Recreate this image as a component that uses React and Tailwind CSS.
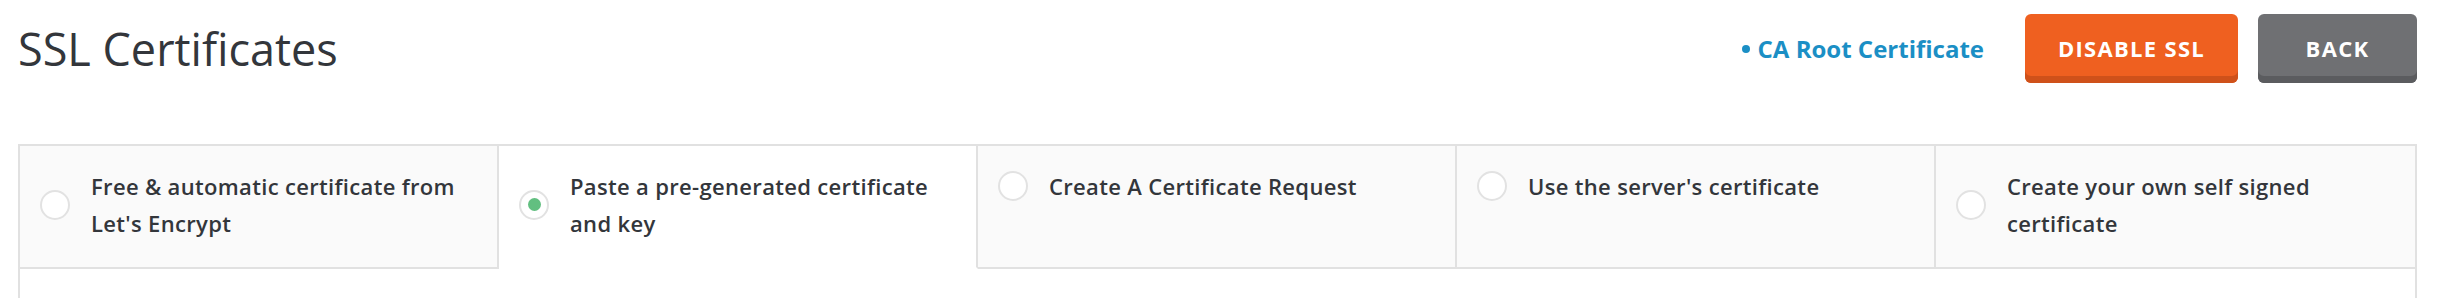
import React from "react";

const tabs = [
  { label: "Free & automatic certificate from Let's Encrypt", selected: false },
  { label: "Paste a pre-generated certificate and key", selected: true },
  { label: "Create A Certificate Request", selected: false },
  { label: "Use the server's certificate", selected: false },
  { label: "Create your own self signed certificate", selected: false },
];

function Radio({ checked }) {
  return (
    <span className="flex h-[30px] w-[30px] shrink-0 items-center justify-center rounded-full border-2 border-[#e2e2e2] bg-white">
      {checked && <span className="h-[13px] w-[13px] rounded-full bg-[#62bf80]" />}
    </span>
  );
}

export default function App() {
  return (
    <div className="h-[298px] w-full overflow-hidden bg-white pl-[18px] pr-[23px] pt-[14px] font-['Open_Sans',sans-serif] text-[#33363b]">
      <div className="flex h-[69px] items-center justify-between">
        <h1 className="text-[45px] font-normal leading-none text-[#33363b]">SSL Certificates</h1>
        <div className="flex h-full items-center">
          <a className="mr-[41px] flex items-center text-[24px] font-bold text-[#1b8fc5]">
            <span className="mr-[8px] h-[8px] w-[8px] rounded-full bg-[#1b8fc5]" />
            CA Root Certificate
          </a>
          <button className="flex h-[69px] w-[213px] items-center justify-center rounded-[6px] bg-[#ef6020] text-[22px] font-bold tracking-[1.3px] text-white shadow-[inset_0_-7px_0_#cf511a]">
            DISABLE SSL
          </button>
          <button className="ml-[20px] flex h-[69px] w-[159px] items-center justify-center rounded-[6px] bg-[#6f7073] text-[22px] font-bold tracking-[1.3px] text-white shadow-[inset_0_-7px_0_#5b5c5f]">
            BACK
          </button>
        </div>
      </div>
      <div className="mt-[61px] border-x-2 border-t-2 border-[#e1e1e1]">
        <div className="grid grid-cols-5">
          {tabs.map((t, i) => (
            <div
              key={i}
              className={
                (t.selected ? "bg-white border-b-white " : "bg-[#fafafa] border-b-[#e1e1e1] ") +
                (i < tabs.length - 1 ? "border-r-2 border-r-[#e1e1e1] " : "") +
                "flex items-start border-b-2 pb-[25px] pl-5 pr-5 pt-[22px]"
              }
            >
              <div className="flex items-center gap-[21px]">
                <Radio checked={t.selected} />
                <span className="text-[22px] font-semibold leading-[36.75px] tracking-[0.33px] text-[#33363b]">{t.label}</span>
              </div>
            </div>
          ))}
        </div>
        <div className="h-[40px] bg-white" />
      </div>
    </div>
  );
}
